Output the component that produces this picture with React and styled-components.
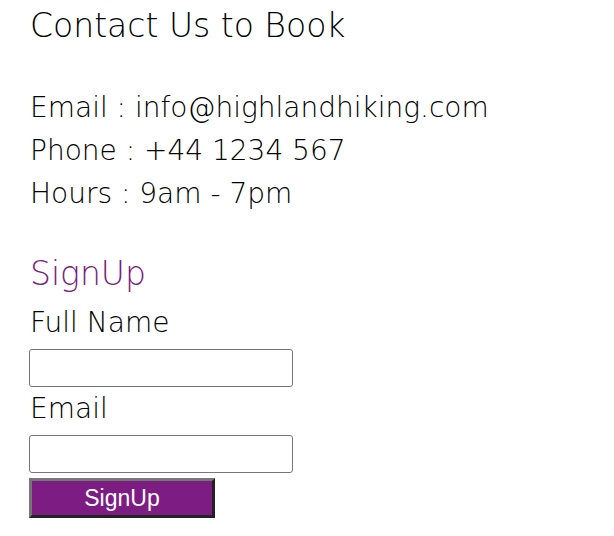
import React from 'react'
import styled, { createGlobalStyle } from 'styled-components';

const GlobalStyle = createGlobalStyle`
  body {
    margin: 0;
    background: #ffffff;
    font-family: "DejaVu Sans", "Noto Sans", sans-serif;
    color: #000000;
  }
`;

const Wrapper = styled.section`
  padding: 0 0 0 30px;
  display: flex;
  flex-direction: column;
  align-items: flex-start;
`;

const Title = styled.h2`
  margin: 0;
  font-size: 33px;
  font-weight: 300;
  line-height: 52px;
`;

const Details = styled.div`
  margin-top: 34px;
  display: flex;
  flex-direction: column;
`;

const Line = styled.p`
  margin: 0;
  font-size: 28px;
  font-weight: 300;
  line-height: 43px;
`;

const FormTitle = styled.h3`
  margin: 37px 0 0;
  font-size: 33px;
  font-weight: 300;
  line-height: 43px;
  color: #7b1e81;
`;

const Form = styled.form`
  display: flex;
  flex-direction: column;
  align-items: flex-start;
  margin-top: 6px;
`;

const Label = styled.label`
  font-size: 28px;
  font-weight: 300;
  line-height: 43px;
`;

const Field = styled.input`
  box-sizing: border-box;
  width: 264px;
  height: 38px;
  margin: 5px 0 0 -1px;
  border: 1px solid #767676;
  border-radius: 3px;
  background: #ffffff;
`;

const Button = styled.button`
  box-sizing: border-box;
  width: 186px;
  height: 40px;
  margin: 5px 0 0 -1px;
  background: #7d1c83;
  color: #ffffff;
  border: 3px solid;
  border-color: #767676 #222222 #222222 #767676;
  font-family: "Liberation Sans", Arial, sans-serif;
  font-size: 23px;
  padding: 0;
`;

const App = () => {
  return (
    <Wrapper>
      <GlobalStyle />
      <Title>Contact Us to Book</Title>
      <Details>
        <Line>Email : info@highlandhiking.com</Line>
        <Line>Phone : +44 1234 567</Line>
        <Line>Hours : 9am - 7pm</Line>
      </Details>
      <FormTitle>SignUp</FormTitle>
      <Form onSubmit={(e) => e.preventDefault()}>
        <Label htmlFor="name">Full Name</Label>
        <Field id="name" type="text" />
        <Label htmlFor="email">Email</Label>
        <Field id="email" type="email" />
        <Button type="submit">SignUp</Button>
      </Form>
    </Wrapper>
  )
};

export default App;
